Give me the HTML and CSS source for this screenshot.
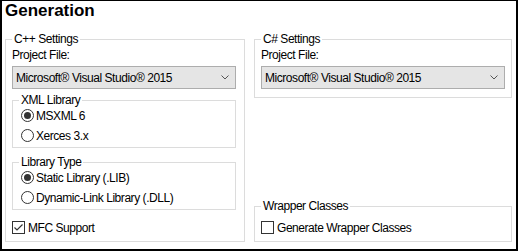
FILE: index.html
```html
<!DOCTYPE html>
<html lang="en">
<head>
    <meta charset="UTF-8">
    <title>Generation</title>
    <link rel="stylesheet" href="styles.css">
</head>
<body>
    <div class="panel">
        <h1 class="title">Generation</h1>
        <div class="columns">
            <fieldset class="group cpp">
                <legend>C++ Settings</legend>
                <div class="field-label">Project File:</div>
                <div class="select">
                    <span>Microsoft® Visual Studio® 2015</span>
                    <svg class="chevron" width="8" height="5" viewBox="0 0 8 5"><path d="M0.5 0.5 L4 4 L7.5 0.5" fill="none" stroke="#555" stroke-width="1"/></svg>
                </div>
                <fieldset class="group inner">
                    <legend>XML Library</legend>
                    <div class="option"><span class="radio checked"></span>MSXML 6</div>
                    <div class="option"><span class="radio"></span>Xerces 3.x</div>
                </fieldset>
                <fieldset class="group inner lib-type">
                    <legend>Library Type</legend>
                    <div class="option"><span class="radio checked"></span>Static Library (.LIB)</div>
                    <div class="option"><span class="radio"></span>Dynamic-Link Library (.DLL)</div>
                </fieldset>
                <div class="option check-row">
                    <span class="checkbox">
                        <svg width="11" height="11" viewBox="0 0 11 11"><path d="M1.5 5.5 L4 8 L9.5 2.5" fill="none" stroke="#333" stroke-width="1.2"/></svg>
                    </span>MFC Support
                </div>
            </fieldset>

            <div class="right-col">
                <fieldset class="group csharp">
                    <legend>C# Settings</legend>
                    <div class="field-label">Project File:</div>
                    <div class="select">
                        <span>Microsoft® Visual Studio® 2015</span>
                        <svg class="chevron" width="8" height="5" viewBox="0 0 8 5"><path d="M0.5 0.5 L4 4 L7.5 0.5" fill="none" stroke="#555" stroke-width="1"/></svg>
                    </div>
                </fieldset>
                <fieldset class="group wrapper">
                    <legend>Wrapper Classes</legend>
                    <div class="option check-row"><span class="checkbox"></span>Generate Wrapper Classes</div>
                </fieldset>
            </div>
        </div>
    </div>
</body>
</html>
```

FILE: styles.css
```css
body {
    margin: 0;
    padding: 0;
    background-color: #fff;
    font-family: "Liberation Sans", Arial, sans-serif;
    font-size: 12px;
    letter-spacing: -0.45px;
    color: #000;
}
.panel {
    box-sizing: border-box;
    width: 518px;
    height: 251px;
    border: 2px solid #000;
    border-top-width: 1px;
    padding: 0 4px 0 3px;
    background-color: #fff;
}
.title {
    margin: 0;
    font-size: 17px;
    line-height: 20px;
    font-weight: bold;
    letter-spacing: 0;
}
.columns {
    display: grid;
    grid-template-columns: 240px 258px;
    gap: 9px;
    margin-top: 11px;
}
.group {
    margin: 0;
    border: 1px solid #dcdcdc;
    padding: 2px 8px 5px 6px;
    min-width: 0;
}
.group legend {
    padding: 0 2px;
    line-height: 14px;
}
.field-label {
    line-height: 14px;
}
.select {
    display: flex;
    align-items: center;
    justify-content: space-between;
    height: 23px;
    box-sizing: border-box;
    margin-top: 4px;
    padding: 0 6px 0 3px;
    background-color: #e5e5e5;
    border: 1px solid #adadad;
}
.chevron {
    display: block;
}
.inner {
    margin-top: 4px;
    padding: 0 6px 3px 6px;
}
.lib-type {
    margin-top: 7px;
}
.option {
    display: flex;
    align-items: center;
    gap: 2px;
    height: 17px;
    padding-left: 2px;
}
.option + .option {
    margin-top: 3px;
}
.radio {
    box-sizing: border-box;
    width: 13px;
    height: 13px;
    border: 1px solid #333;
    border-radius: 50%;
    display: flex;
    align-items: center;
    justify-content: center;
}
.radio.checked::after {
    content: "";
    width: 7px;
    height: 7px;
    border-radius: 50%;
    background-color: #333;
}
.check-row {
    margin-top: 9px;
    padding-left: 0;
    gap: 3px;
}
.checkbox {
    box-sizing: border-box;
    width: 13px;
    height: 13px;
    border: 1px solid #333;
    background-color: #fff;
    display: flex;
    align-items: center;
    justify-content: center;
}
.right-col {
    display: flex;
    flex-direction: column;
    justify-content: space-between;
}
.csharp {
    padding: 2px 6px 8px 6px;
}
.wrapper {
    padding: 0 6px 5px 6px;
}
.wrapper .check-row {
    margin-top: 6px;
}
```
